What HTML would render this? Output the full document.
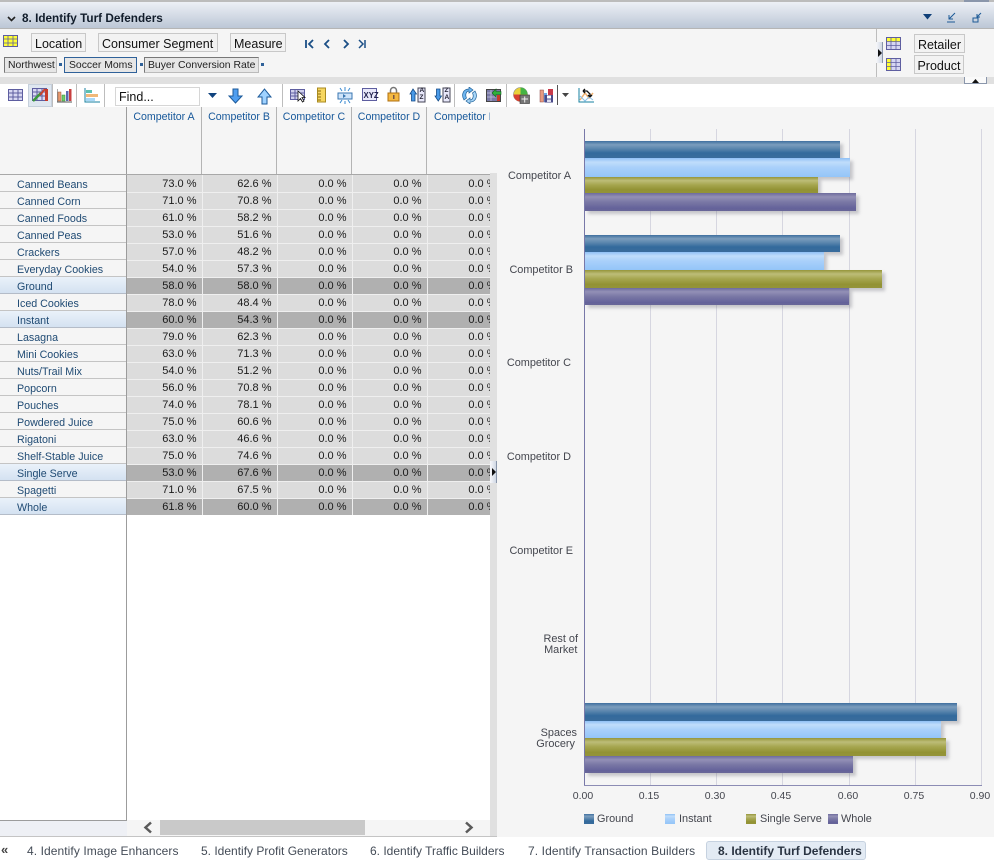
<!DOCTYPE html>
<html><head><meta charset="utf-8"><title>Identify Turf Defenders</title>
<style>
html,body{margin:0;padding:0;background:#fff}
#p{position:relative;width:994px;height:860px;overflow:hidden;font-family:"Liberation Sans",sans-serif;font-size:11px;background:#fff}
.a,.b,.t,svg.i{position:absolute}
.t{white-space:nowrap}
.btn{position:absolute;box-sizing:border-box;border:1px solid #c8c8c8;background:#f2f2f2;height:19px;font-size:12.5px;line-height:18px;padding:1px 3px 0;color:#111;white-space:nowrap;overflow:hidden}
.crumb{position:absolute;box-sizing:border-box;top:57px;height:16px;border:1px solid #777;border-right-color:#bbb;border-bottom-color:#bbb;background:#e6e6e6;font-size:10.4px;line-height:15px;padding:0 3px;color:#222;white-space:nowrap}
.dot{position:absolute;top:63px;width:3px;height:3px;background:#2f6199}
.sep{position:absolute;top:84px;width:1px;height:23px;background:#bdbdbd}
.rh{position:absolute;left:0;height:16px;border-bottom:1px solid #c4c4c4;background:#f5f5f5;color:#1f4a73;font-size:10.7px;line-height:20px;padding-left:17px;box-sizing:content-box;width:109px;white-space:nowrap;overflow:hidden}
.rh.h{background:linear-gradient(#eaf2fa,#d4e2f1);border-bottom-color:#b4bcc8}
table{position:absolute;left:0;top:0;border-collapse:collapse;table-layout:fixed;width:375px}
td{width:75px;height:17px;box-sizing:border-box;padding:1px 5px 0 0;text-align:right;font-size:11px;color:#1a1a1a;background:#dcdcdc;border-right:1px solid #efefef;border-bottom:1px solid #efefef;white-space:nowrap;overflow:hidden}
tr.h td{background:#b0b0b0}
.ch{position:absolute;top:107px;width:75px;height:67px;box-sizing:border-box;border-right:1px solid #b4b4b4;text-align:center;color:#17589a;font-size:10.6px;line-height:18px;padding-top:0;white-space:nowrap;overflow:hidden;background:#f5f5f5}
.bar{position:absolute;left:585px;box-shadow:3px 3px 3px rgba(110,110,120,.35)}
.c1{background:linear-gradient(#3f6f9f 0,#7b9dbd 22%,#5b86ae 45%,#336a9c 70%,#3a6c9c 100%)}
.c2{background:linear-gradient(#8fc0f5 0,#c0ddfb 22%,#a9d0fa 50%,#94c5f8 100%)}
.c3{background:linear-gradient(#95953a 0,#bdbd78 22%,#a5a54e 50%,#929234 80%,#94943a 100%)}
.c4{background:linear-gradient(#6d6b9d 0,#9390b6 22%,#7a78a5 50%,#64629a 85%,#686698 100%)}
.grid{position:absolute;top:129px;width:1px;height:656px;background:#d6d6e0}
.lab{position:absolute;color:#44464e;font-size:10.9px;text-align:right;line-height:11px;white-space:nowrap}
.tick{position:absolute;top:790px;color:#44464e;font-size:10.5px;width:40px;text-align:center}
.tab{position:absolute;top:844px;color:#444c57;font-size:12px;white-space:nowrap}
</style></head><body><div id="p">

<!-- title bar -->
<div class="a" style="left:0;top:0;width:994px;height:2px;background:#bcbcbc"></div>
<div class="a" style="left:0;top:2px;width:994px;height:27px;background:linear-gradient(#edf0f6,#bcc7d6);border-bottom:1px solid #b5b5b5;box-sizing:border-box"></div>
<svg class="i" style="left:7px;top:16px" width="9" height="6"><path d="M1 1l3.500 3.500L8 1" fill="none" stroke="#222" stroke-width="1.600"/></svg>
<div class="t" style="left:22px;top:12px;font-size:11.75px;font-weight:bold;color:#111c2a">8. Identify Turf Defenders</div>
<svg class="i" style="left:923px;top:14px" width="10" height="6"><path d="M0 0h9L4.500 5.500z" fill="#0f3f78"/></svg>
<svg class="i" style="left:946px;top:12px" width="11" height="11"><path d="M9 1L3 7M3 3v4h4M1 10h8" fill="none" stroke="#1d5a96" stroke-width="1"/></svg>
<svg class="i" style="left:972px;top:12px" width="11" height="11"><path d="M9 1L5 5M5 2v3h3M1 6h5v4H1z" fill="none" stroke="#1d5a96" stroke-width="1"/></svg>
<div class="a" style="left:964px;top:0;width:25px;height:2px;background:#8a96ab"></div>

<!-- pivot area -->
<div class="a" style="left:0;top:29px;width:994px;height:48px;background:#f5f5f5"></div>
<div class="a" style="left:0;top:77px;width:994px;height:7px;background:#e0e0e0"></div>
<div class="a" style="left:876px;top:29px;width:1px;height:48px;background:#bdbdbd"></div>

<svg class="i" style="left:3px;top:35px" width="16" height="13"><rect x=".5" y=".5" width="14" height="11" fill="#ffff33" stroke="#5e5ea0"/><path d="M.5 4h14M.5 8h14M5 .5v11M10 .5v11" stroke="#5e5ea0" stroke-width=".8"/></svg>
<div class="btn" style="left:31px;top:33px;width:55px">Location</div>
<div class="btn" style="left:98px;top:33px;width:120px">Consumer Segment</div>
<div class="btn" style="left:230px;top:33px;width:56px">Measure</div>
<svg class="i" style="left:304px;top:38px" width="64" height="13"><g fill="none" stroke="#1b4f86" stroke-width="1.800"><path d="M2 2v8M9 2L5 6l4 4"/><path d="M25 2l-4 4 4 4"/><path d="M40 2l4 4-4 4"/><path d="M55 2l4 4-4 4M61 2v8" stroke-width="1.500"/></g></svg>

<div class="crumb" style="left:4px;width:53px">Northwest</div><div class="dot" style="left:59px"></div>
<div class="crumb" style="left:64px;width:73px;border:1px solid #2f6199;padding-left:4px">Soccer Moms</div><div class="dot" style="left:140px"></div>
<div class="crumb" style="left:144px;width:115px">Buyer Conversion Rate</div><div class="dot" style="left:261px"></div>

<div class="a" style="left:876px;top:42px;width:7px;height:21px;background:linear-gradient(90deg,#f8f8fb,#d0d8e4);border-right:1px solid #8a96ab;box-sizing:border-box"></div>
<svg class="i" style="left:878px;top:49px" width="5" height="8"><path d="M0 0l4 4-4 4z" fill="#111"/></svg>
<svg class="i" style="left:886px;top:37px" width="16" height="14"><rect x=".5" y=".5" width="14" height="12" fill="#d6d6f2" stroke="#5e5ea0"/><rect x="1" y="1" width="13" height="4" fill="#ffff33"/><path d="M.5 4.500h14M.5 8.500h14M5 .5v12M10 .5v12" stroke="#5e5ea0" stroke-width=".8"/></svg>
<svg class="i" style="left:886px;top:58px" width="16" height="14"><rect x=".5" y=".5" width="14" height="12" fill="#d6d6f2" stroke="#5e5ea0"/><rect x="1" y="1" width="4" height="11" fill="#ffff33"/><path d="M.5 4.500h14M.5 8.500h14M5 .5v12M10 .5v12" stroke="#5e5ea0" stroke-width=".8"/></svg>
<div class="btn" style="left:914px;top:34px;width:51px;text-align:center;padding:1px 0 0">Retailer</div>
<div class="btn" style="left:914px;top:55px;width:50px;text-align:center;padding:1px 0 0">Product</div>
<div class="a" style="left:964px;top:77px;width:23px;height:7px;background:#fafafa;border:1px solid #8a96ab;border-top:0;box-sizing:border-box"></div>
<svg class="i" style="left:972px;top:79px" width="8" height="4"><path d="M0 4l3.500-4L7 4z" fill="#111"/></svg>

<!-- toolbar -->
<div class="a" style="left:0;top:84px;width:994px;height:23px;background:#fff"></div>
<div class="a" style="left:28px;top:84px;width:24px;height:23px;background:#dfe7f0;border:1px solid #c6d0dc;box-sizing:border-box"></div>
<div class="sep" style="left:52px"></div><div class="sep" style="left:76px"></div><div class="sep" style="left:104px"></div><div class="sep" style="left:282px"></div><div class="sep" style="left:454px"></div><div class="sep" style="left:506px"></div>
<div class="a" style="left:557px;top:85px;width:1px;height:20px;background:#555"></div>

<svg class="i" style="left:8px;top:89px" width="16" height="13"><rect x=".5" y=".5" width="14" height="11" fill="#d8d8f2" stroke="#5e5ea0"/><path d="M.5 4h14M.5 8h14M5 .5v11M10 .5v11" stroke="#5e5ea0"/></svg>
<svg class="i" style="left:32px;top:88px" width="17" height="15"><rect x=".5" y=".5" width="14" height="12" fill="#d8d8f2" stroke="#5e5ea0"/><path d="M.5 4h14M.5 8h14M5 .5v12M10 .5v12" stroke="#5e5ea0"/><path d="M1 13L9 5" stroke="#3a9a3a" stroke-width="2.500"/><path d="M8 7L13 1" stroke="#c84030" stroke-width="2"/><rect x="13" y="1" width="3" height="12" fill="#c83a2a"/></svg>
<svg class="i" style="left:57px;top:88px" width="15" height="15"><rect x="1" y="4" width="3" height="9" fill="#e89a70" stroke="#a06040" stroke-width=".5"/><rect x="5" y="7" width="3" height="6" fill="#6ccf6a" stroke="#3a8a3a" stroke-width=".5"/><rect x="9" y="3" width="2.500" height="10" fill="#5a6ab0"/><rect x="12" y="1" width="2.500" height="12" fill="#c84040"/><path d="M0 1v13h15" fill="none" stroke="#555"/></svg>
<svg class="i" style="left:84px;top:88px" width="16" height="15"><path d="M1 0v14h15" fill="none" stroke="#1780a0" stroke-width="1"/><rect x="2" y="2" width="6" height="3" fill="#5cc0b0"/><rect x="2" y="6" width="12" height="3" fill="#f0b878"/><rect x="2" y="10" width="9" height="3" fill="#a8d8f8"/></svg>

<div class="a" style="left:115px;top:87px;width:85px;height:19px;box-sizing:border-box;background:#fff;border:1px solid #d6d6d6;font-size:12.5px;line-height:19px;padding-left:3px;color:#111">Find...</div>
<svg class="i" style="left:208px;top:93px" width="10" height="6"><path d="M0 0h9L4.500 5z" fill="#10437e"/></svg>
<svg class="i" style="left:228px;top:88px" width="16" height="17"><path d="M5 1h5v7h4L7.500 15 1 8h4z" fill="#4f9ef0" stroke="#1c5a9a"/></svg>
<svg class="i" style="left:257px;top:88px" width="16" height="17"><path d="M5 16h5V9h4L7.500 1 1 9h4z" fill="#9fd2ff" stroke="#1c5a9a"/></svg>

<svg class="i" style="left:290px;top:88px" width="16" height="15"><rect x=".5" y="1.500" width="14" height="10" fill="#d0d0ec" stroke="#5e5ea0"/><path d="M.5 5h14M.5 8h14M5 1v11" stroke="#5e5ea0"/><path d="M8 3l0 10 2.500-2.500 2 3.500 1.500-1-2-3.500 3 0z" fill="#fff" stroke="#111" stroke-width=".8"/></svg>
<svg class="i" style="left:316px;top:87px" width="12" height="17"><rect x="1.500" y="1" width="8" height="14" fill="#f6d660" stroke="#a88a20"/><path d="M2 4h3M2 7h3M2 10h3M2 13h3" stroke="#8a6a10"/></svg>
<svg class="i" style="left:337px;top:87px" width="17" height="17"><rect x="1" y="6" width="14" height="6" fill="#cfe4fa" stroke="#3a76b0"/><path d="M8 0v4M8 14v3M3 1l2 3M13 1l-2 3M3 16l2-3M13 16l-2-3" stroke="#3a8ad0"/><path d="M6 7l3 2-3 2z" fill="#3a76b0"/></svg>
<svg class="i" style="left:362px;top:88px" width="16" height="14"><rect x=".5" y=".5" width="14" height="12" fill="#e8e8fa" stroke="#5e5ea0"/></svg>
<div class="t" style="left:363.500px;top:90.500px;font-size:7.800px;font-weight:bold;color:#22224e">XYZ</div>
<svg class="i" style="left:387px;top:86px" width="13" height="17"><path d="M3.500 7V4.500a3 3 0 0 1 6 0V7" fill="none" stroke="#777" stroke-width="1.500"/><rect x="1" y="7" width="11" height="8" fill="#f4b840" stroke="#b07010"/><rect x="6" y="9" width="1.500" height="4" fill="#754"/></svg>
<svg class="i" style="left:409px;top:87px" width="17" height="16"><path d="M3 2l3.500 5H5v7H1.500V7H0z" transform="translate(1 0)" fill="#4a9ae8" stroke="#134a86" stroke-width=".8"/><rect x="9" y="1" width="7" height="14" fill="#e8e8fa" stroke="#445"/></svg>
<div class="t" style="left:419.500px;top:88px;font-size:6.500px;font-weight:bold;line-height:6.500px;color:#223">A<br>Z</div>
<svg class="i" style="left:434px;top:87px" width="17" height="16"><path d="M2.500 2H6v7h1.500L4.250 14 1 9h1.500z" fill="#4a9ae8" stroke="#134a86" stroke-width=".8"/><rect x="9" y="1" width="7" height="14" fill="#e8e8fa" stroke="#445"/></svg>
<div class="t" style="left:444.500px;top:88px;font-size:6.500px;font-weight:bold;line-height:6.500px;color:#223">Z<br>A</div>

<svg class="i" style="left:461px;top:87px" width="17" height="17"><path d="M3 13C0 8 2 2 8 2V0l4 3-4 3V4C5 4 4 8 5.500 11z" fill="#6fb6f0" stroke="#1e6098" stroke-width=".7"/><path d="M14 4c3 5 1 11-5 11v2l-4-3 4-3v2c3 0 4-4 2.500-7z" fill="#a8d6f8" stroke="#1e6098" stroke-width=".7"/></svg>
<svg class="i" style="left:486px;top:87px" width="16" height="16"><rect x=".5" y="2.500" width="14" height="12" fill="#7a7aa8" stroke="#444"/><path d="M1 6h13M1 10h13M5 3v11" stroke="#c8c8e0" stroke-width=".7"/><rect x="11" y="8" width="3" height="6" fill="#c83a2a"/><path d="M6 6l4-4v2.500h5v3h-5V10z" fill="#2eb23a" stroke="#156020" stroke-width=".6"/></svg>
<svg class="i" style="left:513px;top:87px" width="17" height="17"><circle cx="7.500" cy="7.500" r="7" fill="#e8d23a" stroke="#888" stroke-width=".6"/><path d="M7.500 7.500V.5A7 7 0 0 1 14.500 7.500z" fill="#44b444"/><path d="M7.500 7.500L.5 7.500A7 7 0 0 0 7.500 14.500z" fill="#d84030"/><rect x="7" y="8" width="9.500" height="8.500" fill="#777" stroke="#333" stroke-width=".6"/><path d="M8.500 12h6.500M11.700 9.500v6" stroke="#eee"/></svg>
<svg class="i" style="left:539px;top:88px" width="15" height="15"><rect x="1" y="2" width="3.500" height="12" fill="#e89a80" stroke="#844" stroke-width=".5"/><rect x="5" y="5" width="3" height="9" fill="#70a8e8"/><rect x="9" y="1" width="5" height="13" fill="#c83a4a"/><rect x="5.500" y="7" width="8.500" height="7.500" fill="#4a4a8a"/><rect x="8" y="7.500" width="4" height="3" fill="#fff"/><rect x="8" y="11.500" width="4" height="2.500" fill="#dde"/></svg>
<svg class="i" style="left:562px;top:93px" width="8" height="5"><path d="M0 0h7L3.500 4z" fill="#444"/></svg>
<svg class="i" style="left:578px;top:88px" width="16" height="15"><path d="M1 0v14h15" fill="none" stroke="#1780a0"/><path d="M2 12L7 5l4 5 4-5" fill="none" stroke="#eeb070" stroke-width="1.500"/><path d="M2 8l5 5 4-4 4 3" fill="none" stroke="#8cc0e8"/><path d="M5 3h4l3 3v3M12 9l-2-2M12 9l2-2M5 3l2-2M5 3l2 2" fill="none" stroke="#111" stroke-width="1.300"/></svg>

<!-- grid header -->
<div class="a" style="left:0;top:107px;width:126px;height:67px;background:#f5f5f5"></div>
<div class="a" style="left:126px;top:107px;width:1px;height:713px;background:#9c9c9c"></div>
<div class="ch" style="left:127px;padding-top:0.500px">Competitor A</div>
<div class="ch" style="left:202px;padding-top:0.500px">Competitor B</div>
<div class="ch" style="left:277px;padding-top:0.500px">Competitor C</div>
<div class="ch" style="left:352px;padding-top:0.500px">Competitor D</div>
<div class="ch" style="left:427px;width:64px;text-align:left;padding-left:7px;padding-top:0.500px">Competitor E</div>
<div class="a" style="left:0;top:174px;width:491px;height:1px;background:#a8a8a8"></div>

<!-- row headers -->
<div class="rh" style="top:175px">Canned Beans</div>
<div class="rh" style="top:192px">Canned Corn</div>
<div class="rh" style="top:209px">Canned Foods</div>
<div class="rh" style="top:226px">Canned Peas</div>
<div class="rh" style="top:243px">Crackers</div>
<div class="rh" style="top:260px">Everyday Cookies</div>
<div class="rh h" style="top:277px">Ground</div>
<div class="rh" style="top:294px">Iced Cookies</div>
<div class="rh h" style="top:311px">Instant</div>
<div class="rh" style="top:328px">Lasagna</div>
<div class="rh" style="top:345px">Mini Cookies</div>
<div class="rh" style="top:362px">Nuts/Trail Mix</div>
<div class="rh" style="top:379px">Popcorn</div>
<div class="rh" style="top:396px">Pouches</div>
<div class="rh" style="top:413px">Powdered Juice</div>
<div class="rh" style="top:430px">Rigatoni</div>
<div class="rh" style="top:447px">Shelf-Stable Juice</div>
<div class="rh h" style="top:464px">Single Serve</div>
<div class="rh" style="top:481px">Spagetti</div>
<div class="rh h" style="top:498px">Whole</div>

<!-- data -->
<div class="a" style="left:127px;top:175px;width:363px;height:340px;overflow:hidden">
<table>
<tr><td>73.0 %</td><td>62.6 %</td><td>0.0 %</td><td>0.0 %</td><td>0.0 %</td></tr>
<tr><td>71.0 %</td><td>70.8 %</td><td>0.0 %</td><td>0.0 %</td><td>0.0 %</td></tr>
<tr><td>61.0 %</td><td>58.2 %</td><td>0.0 %</td><td>0.0 %</td><td>0.0 %</td></tr>
<tr><td>53.0 %</td><td>51.6 %</td><td>0.0 %</td><td>0.0 %</td><td>0.0 %</td></tr>
<tr><td>57.0 %</td><td>48.2 %</td><td>0.0 %</td><td>0.0 %</td><td>0.0 %</td></tr>
<tr><td>54.0 %</td><td>57.3 %</td><td>0.0 %</td><td>0.0 %</td><td>0.0 %</td></tr>
<tr class="h"><td>58.0 %</td><td>58.0 %</td><td>0.0 %</td><td>0.0 %</td><td>0.0 %</td></tr>
<tr><td>78.0 %</td><td>48.4 %</td><td>0.0 %</td><td>0.0 %</td><td>0.0 %</td></tr>
<tr class="h"><td>60.0 %</td><td>54.3 %</td><td>0.0 %</td><td>0.0 %</td><td>0.0 %</td></tr>
<tr><td>79.0 %</td><td>62.3 %</td><td>0.0 %</td><td>0.0 %</td><td>0.0 %</td></tr>
<tr><td>63.0 %</td><td>71.3 %</td><td>0.0 %</td><td>0.0 %</td><td>0.0 %</td></tr>
<tr><td>54.0 %</td><td>51.2 %</td><td>0.0 %</td><td>0.0 %</td><td>0.0 %</td></tr>
<tr><td>56.0 %</td><td>70.8 %</td><td>0.0 %</td><td>0.0 %</td><td>0.0 %</td></tr>
<tr><td>74.0 %</td><td>78.1 %</td><td>0.0 %</td><td>0.0 %</td><td>0.0 %</td></tr>
<tr><td>75.0 %</td><td>60.6 %</td><td>0.0 %</td><td>0.0 %</td><td>0.0 %</td></tr>
<tr><td>63.0 %</td><td>46.6 %</td><td>0.0 %</td><td>0.0 %</td><td>0.0 %</td></tr>
<tr><td>75.0 %</td><td>74.6 %</td><td>0.0 %</td><td>0.0 %</td><td>0.0 %</td></tr>
<tr class="h"><td>53.0 %</td><td>67.6 %</td><td>0.0 %</td><td>0.0 %</td><td>0.0 %</td></tr>
<tr><td>71.0 %</td><td>67.5 %</td><td>0.0 %</td><td>0.0 %</td><td>0.0 %</td></tr>
<tr class="h"><td>61.8 %</td><td>60.0 %</td><td>0.0 %</td><td>0.0 %</td><td>0.0 %</td></tr>
</table></div>

<!-- splitter -->
<div class="a" style="left:490px;top:107px;width:7px;height:66px;background:#f5f5f5"></div>
<div class="a" style="left:490px;top:173px;width:7px;height:663px;background:#e0e0e0"></div>
<div class="a" style="left:490px;top:461px;width:7px;height:22px;background:linear-gradient(90deg,#f8f8fb,#d0d8e4);border-right:1px solid #8a96ab;box-sizing:border-box"></div>
<svg class="i" style="left:492px;top:468px" width="5" height="8"><path d="M0 0l4 4-4 4z" fill="#111"/></svg>

<!-- scrollbar -->
<div class="a" style="left:0;top:820px;width:127px;height:16px;background:#eef0f5;border-top:1px solid #9c9c9c;box-sizing:border-box"></div>
<div class="a" style="left:127px;top:820px;width:363px;height:16px;background:#f5f5f5"></div>
<div class="a" style="left:160px;top:820px;width:205px;height:15px;background:#c9c9c9"></div>
<svg class="i" style="left:142px;top:821px" width="12" height="13"><path d="M9 1.500L3.500 6.500 9 11.500" fill="none" stroke="#5a5a5a" stroke-width="2.500"/></svg>
<svg class="i" style="left:463px;top:821px" width="12" height="13"><path d="M3 1.500L8.500 6.500 3 11.500" fill="none" stroke="#5a5a5a" stroke-width="2.500"/></svg>
<div class="a" style="left:0;top:836px;width:497px;height:1px;background:#c4c4c4"></div>

<!-- chart -->
<div class="a" style="left:497px;top:107px;width:497px;height:730px;background:#f5f5f5"></div>
<div class="grid" style="left:650px"></div><div class="grid" style="left:716px"></div><div class="grid" style="left:782px"></div><div class="grid" style="left:849px"></div><div class="grid" style="left:915px"></div><div class="grid" style="left:981px"></div>
<div class="a" style="left:584px;top:129px;width:1px;height:657px;background:#7878a8"></div>
<div class="a" style="left:584px;top:785px;width:398px;height:1px;background:#8c8cb4"></div>

<div class="bar c1" style="top:141px;height:17px;width:255px"></div>
<div class="bar c2" style="top:158px;height:19px;width:265px"></div>
<div class="bar c3" style="top:177px;height:16px;width:233px"></div>
<div class="bar c4" style="top:193px;height:18px;width:271px"></div>

<div class="bar c1" style="top:235px;height:17px;width:255px"></div>
<div class="bar c2" style="top:252px;height:18px;width:239px"></div>
<div class="bar c3" style="top:270px;height:18px;width:297px"></div>
<div class="bar c4" style="top:288px;height:17px;width:264px"></div>

<div class="bar c1" style="top:703px;height:18px;width:372px"></div>
<div class="bar c2" style="top:721px;height:17px;width:356px"></div>
<div class="bar c3" style="top:738px;height:18px;width:361px"></div>
<div class="bar c4" style="top:756px;height:17px;width:268px"></div>

<div class="lab" style="right:423px;top:171px">Competitor A</div>
<div class="lab" style="right:421px;top:265px">Competitor B</div>
<div class="lab" style="right:423px;top:358px">Competitor C</div>
<div class="lab" style="right:423px;top:452px">Competitor D</div>
<div class="lab" style="right:421px;top:546px">Competitor E</div>
<div class="lab" style="right:416px;top:634px;text-align:center">Rest of<br>Market</div>
<div class="lab" style="right:417px;top:728px">Spaces</div>
<div class="lab" style="right:419px;top:739px">Grocery</div>

<div class="tick" style="left:563px">0.00</div>
<div class="tick" style="left:629px">0.15</div>
<div class="tick" style="left:695px">0.30</div>
<div class="tick" style="left:761px">0.45</div>
<div class="tick" style="left:828px">0.60</div>
<div class="tick" style="left:894px">0.75</div>
<div class="tick" style="left:960px">0.90</div>

<div class="a c1" style="left:584px;top:814px;width:10px;height:10px"></div>
<div class="lab" style="left:597px;top:814px">Ground</div>
<div class="a c2" style="left:665px;top:814px;width:10px;height:10px"></div>
<div class="lab" style="left:679px;top:814px">Instant</div>
<div class="a c3" style="left:746px;top:814px;width:10px;height:10px"></div>
<div class="lab" style="left:760px;top:814px">Single Serve</div>
<div class="a c4" style="left:828px;top:814px;width:10px;height:10px"></div>
<div class="lab" style="left:841px;top:814px">Whole</div>

<!-- tabs -->
<div class="t" style="left:1px;top:842px;font-size:13px;font-weight:bold;color:#444">«</div>
<div class="tab" style="left:27px;letter-spacing:.08px">4. Identify Image Enhancers</div>
<div class="tab" style="left:201px">5. Identify Profit Generators</div>
<div class="tab" style="left:370px">6. Identify Traffic Builders</div>
<div class="tab" style="left:528px;letter-spacing:.1px">7. Identify Transaction Builders</div>
<div class="a" style="left:706px;top:841px;width:160px;height:19px;box-sizing:border-box;background:#e3ebf4;border:1px solid #c6d2e0;border-radius:3px"></div>
<div class="tab" style="left:718px;font-weight:bold;color:#2a3442">8. Identify Turf Defenders</div>
</div></body></html>
